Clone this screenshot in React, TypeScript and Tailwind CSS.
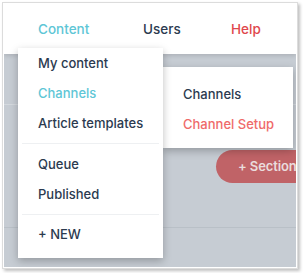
export default function App() {
  const font = { fontFamily: "Inter, 'Open Sans', sans-serif" };
  return (
    <div className="w-[304px] h-[273px] bg-white pt-[2px] pl-[2px]" style={font}>
      <div className="relative w-[296px] h-[267px] border border-[#dcdcdc] bg-white p-[1px] shadow-[2px_2px_3px_rgba(0,0,0,0.25)]">
        <div className="relative h-full w-full overflow-hidden bg-[#c6ccd3]">
          {/* top nav */}
          <nav className="relative z-10 grid h-[50px] grid-cols-[105px_88px_auto] items-center bg-white pl-[34px] text-[13.5px] font-medium shadow-[0_2px_4px_rgba(0,0,0,0.12)]">
            <span className="text-[#5ec6d6]">Content</span>
            <span className="text-[#2b3a4f]">Users</span>
            <span className="text-[#e0474c]">Help</span>
          </nav>

          {/* page behind menu */}
          <div className="h-[51px] border-b border-[#d4d9de]" />
          <div className="mt-[45px] flex justify-end">
            <button className="mr-[-20px] h-[33px] w-[100px] rounded-full bg-[#c06367] pl-[22px] text-left text-[13px] font-semibold tracking-[-0.1px] text-[#eadcdd]">
              + Section
            </button>
          </div>
          <div className="mt-[44px] border-b border-[#b9c0c7]" />

          {/* dropdown */}
          <div className="absolute left-[14px] top-[44px] z-20 w-[145px] bg-white pb-[8px] pt-[1px] text-[13px] font-medium text-[#2b3a4f] shadow-[0_3px_8px_rgba(0,0,0,0.25)]">
            <div className="flex h-[30px] items-center pl-[20px]">My content</div>
            <div className="flex h-[30px] items-center pl-[20px] text-[#5ec6d6]">Channels</div>
            <div className="flex h-[30px] items-center pl-[20px]">Article templates</div>
            <div className="mx-1 mb-[6px] mt-[4px] border-t border-[#eef0f2]" />
            <div className="flex h-[30px] items-center pl-[20px]">Queue</div>
            <div className="flex h-[30px] items-center pl-[20px]">Published</div>
            <div className="mx-1 mb-[5px] mt-[4px] border-t border-[#eef0f2]" />
            <div className="flex h-[30px] items-center pl-[20px]">+ NEW</div>
          </div>

          {/* submenu */}
          <div className="absolute left-[159px] top-[63px] z-10 w-[130px] bg-white pb-[8px] pt-[13px] text-[13px] font-medium shadow-[0_3px_8px_rgba(0,0,0,0.25)]">
            <div className="flex h-[30px] items-center pl-[20px] text-[#2b3a4f]">Channels</div>
            <div className="flex h-[30px] items-center pl-[20px] text-[#ef6a6a]">Channel Setup</div>
          </div>
        </div>
      </div>
    </div>
  );
}
